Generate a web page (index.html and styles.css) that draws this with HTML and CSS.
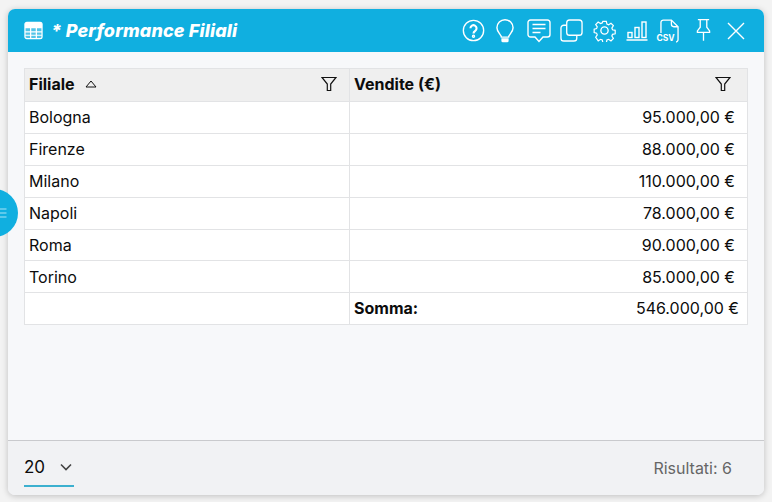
FILE: index.html
```html
<!DOCTYPE html>
<html lang="it">
<head>
<meta charset="utf-8">
<title>Performance Filiali</title>
<link rel="stylesheet" href="styles.css">
</head>
<body>
<main class="window">
  <header class="titlebar">
    <svg class="table-icon" viewBox="0 0 20 20"><rect x="1" y="1.5" width="18" height="17" rx="2" class="fill-soft"/><path d="M1 3.5a2 2 0 0 1 2-2h14a2 2 0 0 1 2 2v3H1z" class="fill-solid"/><path d="M1 7h18M1 11.5h18M1 15h18M7 6v13M13 6v13" class="grid-line"/><rect x="1" y="1.5" width="18" height="17" rx="2" class="grid-line"/></svg>
    <h1 class="title">* Performance Filiali</h1>
    <div class="tools">
      <span class="tool tool-help"><svg viewBox="0 0 24 24"><circle cx="12" cy="12" r="10.6"/><path d="M8.8 9.6a3.2 3.2 0 1 1 5 2.7c-1.2.8-1.8 1.4-1.8 2.8" class="thick"/><circle cx="12" cy="17.9" r=".7" class="thick"/></svg></span>
      <span class="tool tool-bulb"><svg viewBox="1.400 0 17.200 23.200"><path d="M6.5 17.5c0-2.5-4.3-4.500-4.300-9a7.800 7.800 0 0 1 15.600 0c0 4.500-4.300 6.500-4.300 9z"/><path d="M6.500 18.500h7v2.500a1.500 1.500 0 0 1-1.500 1.500h-4a1.500 1.500 0 0 1-1.500-1.500z" class="solid"/></svg></span>
      <span class="tool tool-chat"><svg viewBox="0 0 24 24"><path d="M3.500 1h17A2.500 2.500 0 0 1 23 3.500v12a2.500 2.500 0 0 1-2.500 2.500H16l-4 4.500L8 18H3.500A2.500 2.500 0 0 1 1 15.500v-12A2.500 2.500 0 0 1 3.500 1z"/><path d="M5.500 5.500h13M5.500 9.500h13M5.500 13.500h8"/></svg></span>
      <span class="tool tool-copy"><svg viewBox="0 0 24 24"><rect x="7" y="1" width="16" height="16" rx="3"/><path d="M7 6.500H4a3 3 0 0 0-3 3V20a3 3 0 0 0 3 3h10.500a3 3 0 0 0 3-3v-3"/></svg></span>
      <span class="tool tool-gear"><svg viewBox="0 0 24 24"><circle cx="12" cy="12" r="3.800"/><path d="M10 1.200h4l.7 3.300 1.900.8 2.800-1.800 2.800 2.800-1.800 2.800.8 1.900 3.100.700v4l-3.100.700-.8 1.900 1.800 2.800-2.800 2.800-2.800-1.800-1.900.8-.7 3.100h-4l-.7-3.100-1.900-.8-2.800 1.800L1.700 19.700l1.800-2.800-.8-1.900L-.1 14.300v-4l2.800-.7.800-1.900L1.700 4.900l2.800-2.800 2.800 1.800 1.900-.8z" transform="translate(1.300 1.300) scale(.9)"/></svg></span>
      <span class="tool tool-chart"><svg viewBox="0 0 22 20"><path d="M.5 19h21"/><rect x="2" y="11.500" width="4" height="5"/><rect x="9" y="6.500" width="4" height="10"/><rect x="16" y="1" width="4" height="15.500"/></svg></span>
      <span class="tool tool-csv"><svg viewBox="0 0 20 24"><path d="M1 14V3a2.500 2.500 0 0 1 2.500-2.500H12L19 7.500V21a2.500 2.500 0 0 1-2.500 2.500H15"/><path d="M12 .5V5a2.500 2.500 0 0 0 2.500 2.500H19"/></svg><span class="csv-label">CSV</span></span>
      <span class="tool tool-pin"><svg viewBox="0 0 16 24"><path d="M2 1h12M4.500 1v8L1.500 13v1.500h13V13l-3-4V1M8 14.500V23.500"/></svg></span>
      <span class="tool tool-close"><svg viewBox="0 0 18 18"><path d="M1 1l16 16M17 1L1 17"/></svg></span>
    </div>
  </header>

  <section class="content">
    <table class="data">
      <colgroup><col class="col-a"><col></colgroup>
      <thead>
        <tr>
          <th><div class="th-inner"><span>Filiale</span>
            <svg class="sort" viewBox="0 0 12 8"><path d="M6 1l5 6H1z"/></svg>
            <svg class="filter" viewBox="0 0 16 16"><path d="M1 1.500h14L9.700 8v6.500H6.300V8z"/></svg></div></th>
          <th><div class="th-inner"><span>Vendite (€)</span>
            <svg class="filter filter-last" viewBox="0 0 16 16"><path d="M1 1.500h14L9.700 8v6.500H6.300V8z"/></svg></div></th>
        </tr>
      </thead>
      <tbody>
        <tr><td>Bologna</td><td class="num">95.000,00 €</td></tr>
        <tr><td>Firenze</td><td class="num">88.000,00 €</td></tr>
        <tr><td>Milano</td><td class="num">110.000,00 €</td></tr>
        <tr><td>Napoli</td><td class="num">78.000,00 €</td></tr>
        <tr><td>Roma</td><td class="num">90.000,00 €</td></tr>
        <tr><td>Torino</td><td class="num">85.000,00 €</td></tr>
      </tbody>
      <tfoot>
        <tr><td></td><td><div class="sum"><strong>Somma:</strong><span>546.000,00 €</span></div></td></tr>
      </tfoot>
    </table>
  </section>

  <footer class="pager">
    <div class="page-size"><span>20</span>
      <svg class="chev" viewBox="0 0 12 8"><path d="M1 1.500l5 5 5-5"/></svg></div>
    <div class="results">Risultati: 6</div>
  </footer>
</main>
<button class="side-toggle" aria-label="Menu"><svg viewBox="0 0 7 10"><path d="M0 1h6.500M0 5h6.500M0 9h6.500"/></svg></button>
</body>
</html>
```

FILE: styles.css
```css
* { box-sizing: border-box; }
html, body { height: 100%; }
body {
  margin: 0;
  padding: 9px 8px 7px;
  background: #f3f3f3;
  font-family: Inter, "Liberation Sans", sans-serif;
  font-size: 16px;
  color: #0c0c0c;
  overflow: hidden;
}
.window {
  height: 486px;
  display: flex;
  flex-direction: column;
  background: #f7f8fa;
  border-radius: 7px;
  overflow: hidden;
  box-shadow: 0 1px 6px rgba(0,0,0,.22);
}
.titlebar {
  height: 43px;
  flex: none;
  display: flex;
  align-items: center;
  background: #10afe0;
  color: #fff;
  padding: 0 19px 0 16px;
}
.table-icon { width: 19px; height: 19px; flex: none; margin-right: 8px; }
.fill-soft { fill: rgba(255,255,255,.28); }
.fill-solid { fill: #fff; }
.grid-line { fill: none; stroke: #fff; stroke-width: 1.300; }
.title {
  margin: 0;
  font-size: 18px;
  font-weight: 800;
  font-style: italic;
  letter-spacing: .15px;
}
.tools { margin-left: auto; display: flex; align-items: center; }
.tool { display: block; position: relative; flex: none; }
.tool svg { display: block; width: 100%; height: 100%; fill: none; stroke: #fff; stroke-width: 1.400; }
.tool svg .solid { fill: #fff; stroke: none; }
.tool svg .thick { stroke-width: 2.200; }
.tool-help { width: 23px; height: 23px; margin-right: 11.500px; }
.tool-bulb { width: 18px; height: 24px; margin-right: 13px; }
.tool-chat { width: 24px; height: 24px; margin-right: 8.500px; }
.tool-copy { width: 23px; height: 23px; margin-right: 10px; }
.tool-gear { width: 23px; height: 23px; margin-right: 10.500px; }
.tool-chart { width: 22px; height: 20px; margin-right: 11.500px; }
.tool-csv { width: 19px; height: 24px; margin-right: 17px; }
.csv-label {
  position: absolute;
  left: -3px;
  bottom: 0;
  font-size: 8.500px;
  font-weight: 700;
  line-height: 9px;
  color: #fff;
  background: #10afe0;
  padding-right: 1px;
}
.tool-pin { width: 15px; height: 24px; margin-right: 16.500px; margin-top: -2px; }
.tool-close { width: 18px; height: 18px; }

.content { flex: 1; padding: 16px 16px 0; min-height: 0; }
.data {
  width: 100%;
  table-layout: fixed;
  border-collapse: collapse;
  background: #fff;
}
.col-a { width: 325px; }
.data th, .data td { border: 1px solid #e2e3e5; padding: 0 4px; }
.data th { height: 33.200px; background: #efefef; font-weight: 700; text-align: left; padding-bottom: 2px; }
.data td { height: 31.850px; font-weight: 400; padding-bottom: .6px; }
.th-inner { display: flex; align-items: center; }
.sort { width: 12px; height: 8px; margin-left: 10px; fill: none; stroke: #111; stroke-width: 1; }
.filter { width: 16px; height: 16px; margin-left: auto; margin-right: 8px; fill: none; stroke: #111; stroke-width: 1.200; }
.filter-last { margin-right: 12px; }
.data .num { text-align: right; padding-right: 12px; }
.sum { display: flex; justify-content: space-between; padding-right: 4px; }

.pager {
  height: 55px;
  flex: none;
  display: flex;
  align-items: center;
  justify-content: space-between;
  background: #f1f2f4;
  border-top: 1px solid #c9cacd;
  padding: 0 32px 0 16px;
}
.page-size {
  width: 50px;
  height: 35px;
  display: flex;
  align-items: center;
  gap: 15px;
  border-bottom: 2px solid #3cb0cf;
  margin-top: 3px;
  padding-bottom: 3px;
  font-size: 17px;
}
.chev { width: 12px; height: 8px; fill: none; stroke: #444; stroke-width: 1.600; }
.results { color: #666; font-size: 16px; }

.side-toggle {
  position: absolute;
  left: -30px;
  top: 189px;
  width: 48px;
  height: 48px;
  padding: 0;
  border: 0;
  border-radius: 50%;
  background: #10afe0;
}
.side-toggle svg {
  position: absolute;
  left: 30px;
  top: 19px;
  width: 7px;
  height: 10px;
  fill: none;
  stroke: #a9e4f6;
  stroke-width: 1.200;
}
```
